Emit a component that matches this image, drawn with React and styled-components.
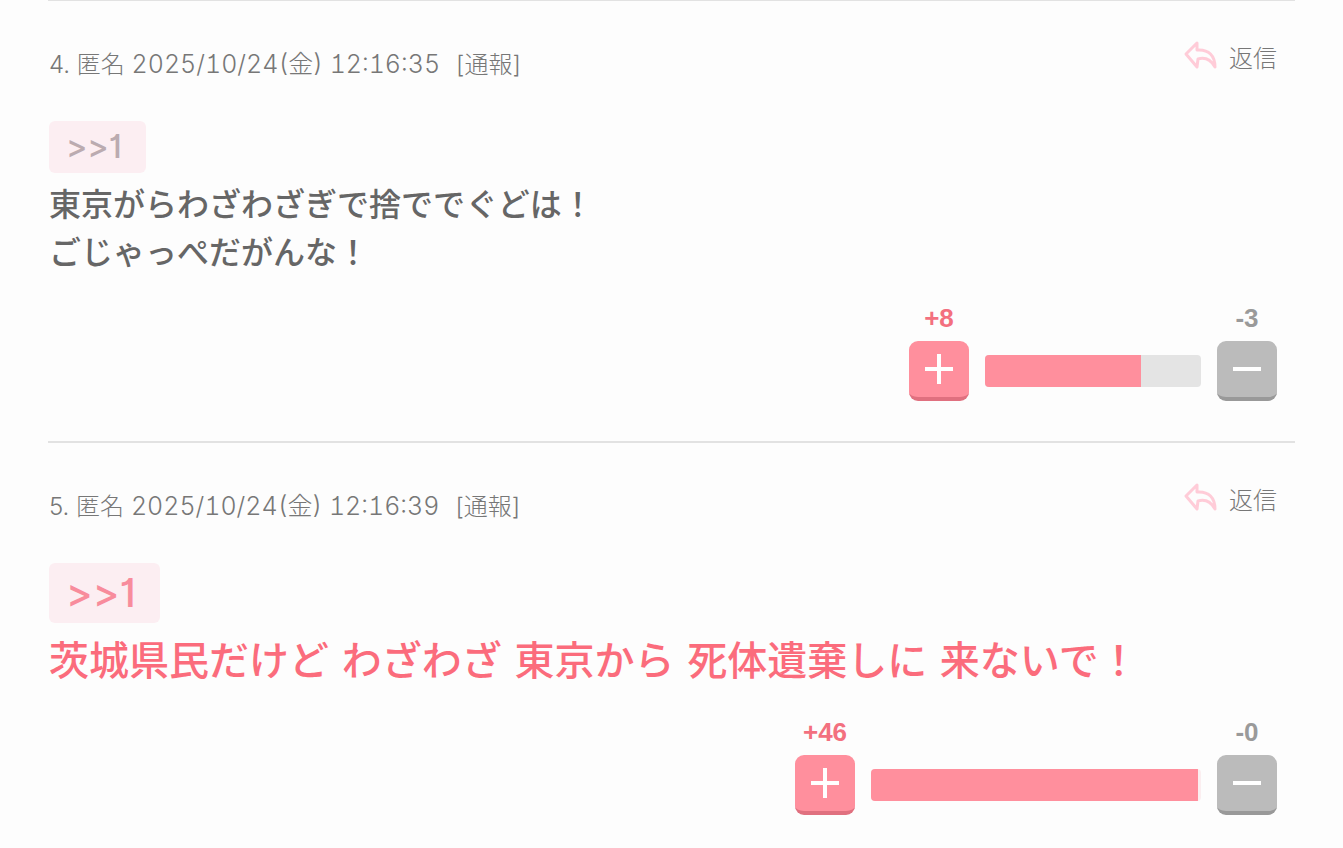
import React from "react";
import styled, { createGlobalStyle } from "styled-components";

// STYLES
const GlobalStyle = createGlobalStyle`
   * {
      box-sizing: border-box;
   }

   body {
      margin: 0;
      background: #fdfdfd;
      font-family: Inter, "Noto Sans CJK JP", sans-serif;
   }
`;

const List = styled.ol`
   margin: 0 48px;
   padding: 0;
   list-style: none;
   border-top: 1px solid #e2e2e2;
`;

const Item = styled.li`
   padding: 40px 18px 40px 1px;
   border-bottom: 2px solid #e2e2e2;

   &:last-child {
      border-bottom: 0;
      padding-bottom: 32px;
   }
`;

const Header = styled.header`
   display: flex;
   justify-content: space-between;
   align-items: flex-start;
   margin-bottom: 32px;
`;

const Meta = styled.div`
   font-size: 24px;
   font-weight: 300;
   line-height: 48px;
   color: #777;

   time {
      font-size: 25px;
      line-height: 1;
      font-feature-settings: "tnum", "cv01";
   }
`;

const ReportLink = styled.a`
   margin-left: 16px;
   color: inherit;
   text-decoration: none;
`;

const ReplyLink = styled.a`
   display: flex;
   align-items: center;
   gap: 12px;
   font-size: 24px;
   font-weight: 300;
   line-height: 36px;
   color: #777;
   text-decoration: none;

   svg {
      width: 34px;
      height: 30px;
      margin-bottom: 6px;
   }
`;

const Quote = styled.a`
   display: table;
   padding: 6px 24px 6px 17px;
   margin-bottom: 8px;
   border-radius: 6px;
   background: #fceef2;
   font-weight: 500;
   font-feature-settings: "calt" 0, "cv01";
   font-size: ${(props) => (props.$large ? "40px" : "32px")};
   line-height: ${(props) => (props.$large ? "48px" : "40px")};
   color: ${(props) => (props.$large ? "#f88c9c" : "#bbabb0")};
   text-decoration: none;
`;

const Body = styled.p`
   margin: 0 0 26px;
   font-family: "DejaVu Sans", "Noto Sans CJK JP", sans-serif;
   font-weight: 500;
   font-size: ${(props) => (props.$large ? "40px" : "32px")};
   line-height: ${(props) => (props.$large ? "60px" : "48px")};
   color: ${(props) => (props.$large ? "#fb6c7c" : "#666")};
   white-space: pre-line;
`;

const Votes = styled.div`
   display: flex;
   justify-content: flex-end;
   align-items: flex-end;
   gap: 16px;
`;

const Vote = styled.div`
   display: flex;
   flex-direction: column;
   align-items: center;
   gap: 8px;
   width: 60px;
   font-family: "Liberation Sans", Arial, sans-serif;
   font-size: 26px;
   font-weight: bold;
   line-height: 30px;
   color: ${(props) => (props.$plus ? "#f3707f" : "#9a9a9a")};
`;

const VoteButton = styled.button`
   display: flex;
   align-items: center;
   justify-content: center;
   width: 60px;
   height: 60px;
   padding: 0;
   border: 0;
   border-bottom: 4px solid ${(props) => (props.$plus ? "#e0707f" : "#999")};
   border-radius: 9px;
   background: ${(props) => (props.$plus ? "#ff8f9d" : "#bbb")};
   cursor: pointer;
`;

const Bar = styled.div`
   width: ${(props) => (props.$wide ? "330px" : "216px")};
   height: 32px;
   margin-bottom: 14px;
   border-radius: 4px;
   background: ${(props) => (props.$wide ? "#fbeef0" : "#e4e4e4")};
   overflow: hidden;
`;

const Fill = styled.div`
   height: 100%;
   background: #ff8f9d;
`;

const comments = [
   {
      id: 4,
      date: "2025/10/24(金) 12:16:35",
      text: "東京がらわざわざぎで捨ででぐどは！\nごじゃっぺだがんな！",
      plus: 8,
      minus: 3,
      ratio: 72,
   },
   {
      id: 5,
      date: "2025/10/24(金) 12:16:39",
      text: "茨城県民だけど わざわざ 東京から 死体遺棄しに 来ないで！",
      plus: 46,
      minus: 0,
      ratio: 99,
      large: true,
   },
];

const ReplyIcon = () => (
   <svg viewBox="0 0 34 30" fill="none" stroke="#ffccd8" strokeWidth="3" strokeLinejoin="round" aria-hidden="true">
      <path d="M14 2 L3 13 L14 26 L15 18 C22 16 28 19 32 26 C32 15 26 8 14 9 Z" />
   </svg>
);

const Sign = ({ plus }) => (
   <svg width="28" height="30" viewBox="0 0 28 30" stroke="#fff" strokeWidth="4" aria-hidden="true">
      <path d={plus ? "M0 15H28M14 0V30" : "M0 15H28"} />
   </svg>
);

const Comment = ({ id, date, text, plus, minus, ratio, large }) => {
   return (
      <Item id={`comment${id}`}>
         <Header>
            <Meta>
               {id}. 匿名 <time>{date}</time>
               <ReportLink href="#report">[通報]</ReportLink>
            </Meta>
            <ReplyLink href="#reply">
               <ReplyIcon />
               返信
            </ReplyLink>
         </Header>
         <Quote href="#comment1" $large={large}>
            &gt;&gt;1
         </Quote>
         <Body $large={large}>{text}</Body>
         <Votes>
            <Vote $plus>
               <span>+{plus}</span>
               <VoteButton type="button" aria-label="プラス" $plus>
                  <Sign plus />
               </VoteButton>
            </Vote>
            <Bar $wide={large}>
               <Fill style={{ width: `${ratio}%` }} />
            </Bar>
            <Vote>
               <span>-{minus}</span>
               <VoteButton type="button" aria-label="マイナス">
                  <Sign />
               </VoteButton>
            </Vote>
         </Votes>
      </Item>
   );
};

const App = () => {
   return (
      <>
         <GlobalStyle />
         <List>
            {comments.map((comment) => (
               <Comment key={comment.id} {...comment} />
            ))}
         </List>
      </>
   );
};

export default App;
